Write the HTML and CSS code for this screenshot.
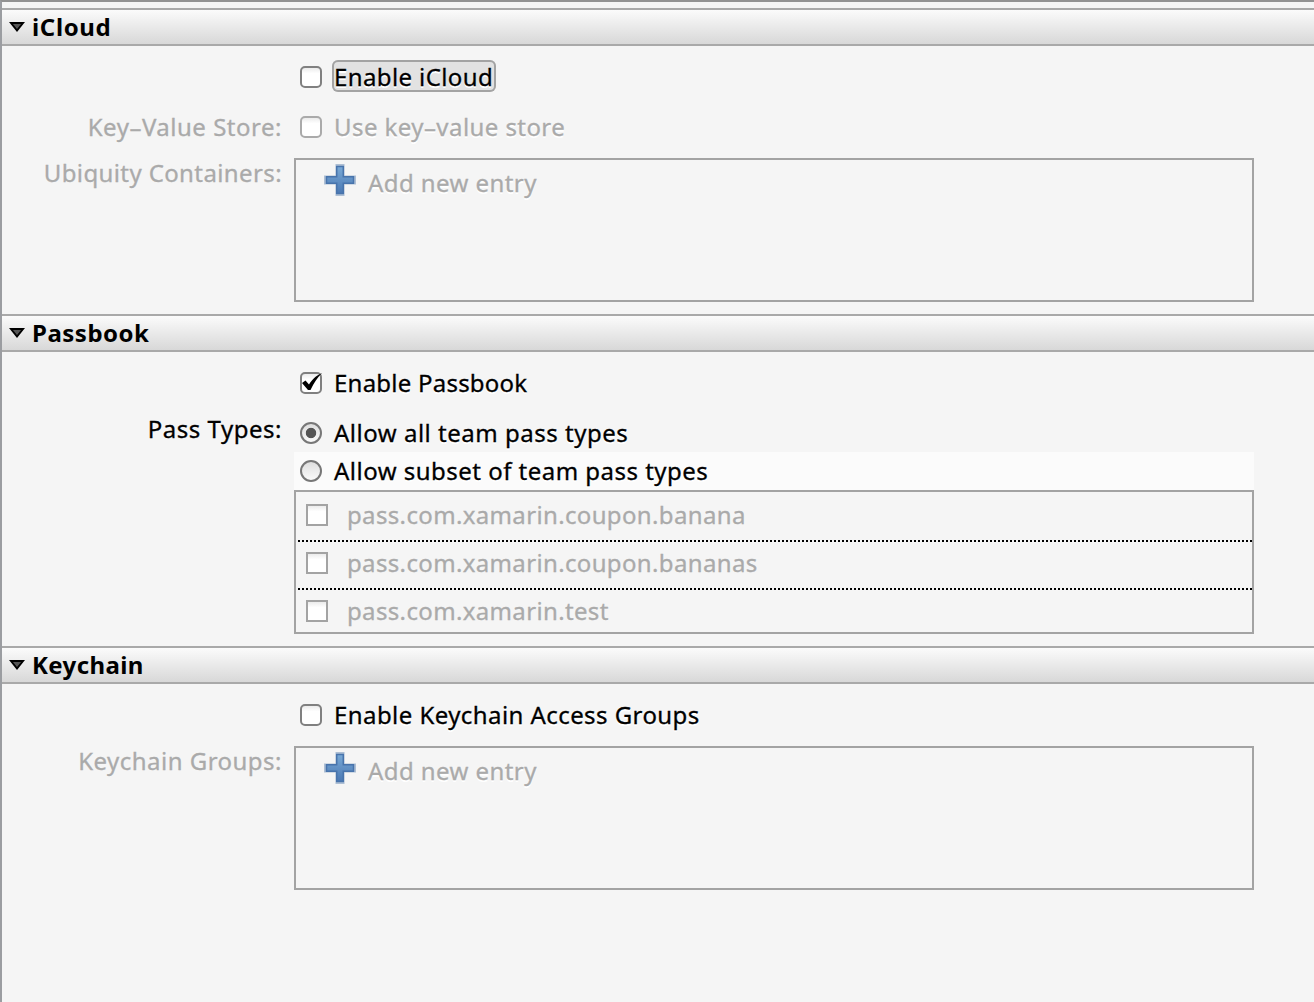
FILE: index.html
```html
<!DOCTYPE html>
<html lang="en">
<head>
<meta charset="utf-8">
<title>Entitlements</title>
<link rel="stylesheet" href="styles.css">
</head>
<body>
<main class="editor">
  <section class="panel">
    <h2 class="panel-title"><svg class="arrow" viewBox="0 0 16 12"><path d="M2 2H14L8 9.5Z"/></svg><span class="t-icloud">iCloud</span></h2>
    <div class="form">
      <label class="row option"><i class="check"></i><span class="focus"><span class="t-enable-icloud">Enable iCloud</span></span></label>
      <div class="label row muted"><span class="t-kv">Key–Value Store:</span></div>
      <label class="row option muted"><i class="check"></i><span class="t-usekv">Use key–value store</span></label>
      <div class="label muted spaced"><span class="t-ubiq">Ubiquity Containers:</span></div>
      <div class="box spaced"><div class="add muted"><svg class="plus" viewBox="0 0 32 32"><defs><linearGradient id="blue" x2="0" y2="1"><stop stop-color="#79a9d6"/><stop offset="1" stop-color="#4a78b3"/></linearGradient></defs><path class="plus-halo" d="M11.5 0H20.5V11.5H32V20.5H20.5V32H11.5V20.5H0V11.5H11.5Z"/><path class="plus-body" d="M12.7 2.5H19.3V12.7H29.5V19.3H19.3V29.5H12.7V19.3H2.5V12.7H12.7Z"/></svg><span class="t-add">Add new entry</span></div></div>
    </div>
  </section>
  <section class="panel">
    <h2 class="panel-title"><svg class="arrow" viewBox="0 0 16 12"><path d="M2 2H14L8 9.5Z"/></svg><span class="t-passbook">Passbook</span></h2>
    <div class="form">
      <label class="row option"><i class="check"><svg class="tick" viewBox="0 0 22 22"><path d="M2 11L5.5 8.5L9 12.5C12 8 15 4 22 1C17 6 14 11 10.5 18H8Z"/></svg></i><span class="t-enable-pass">Enable Passbook</span></label>
      <div class="label spaced"><span class="t-types">Pass Types:</span></div>
      <div class="spaced">
        <label class="option radio-row"><i class="radio on"></i><span class="t-all">Allow all team pass types</span></label>
        <label class="option radio-row tint"><i class="radio"></i><span class="t-subset">Allow subset of team pass types</span></label>
        <ul class="box list muted">
          <li><i class="square"></i><span class="t-pass">pass.com.xamarin.coupon.banana</span></li>
          <li><i class="square"></i><span class="t-pass">pass.com.xamarin.coupon.bananas</span></li>
          <li><i class="square"></i><span class="t-pass">pass.com.xamarin.test</span></li>
        </ul>
      </div>
    </div>
  </section>
  <section class="panel">
    <h2 class="panel-title"><svg class="arrow" viewBox="0 0 16 12"><path d="M2 2H14L8 9.5Z"/></svg><span class="t-keychain">Keychain</span></h2>
    <div class="form">
      <label class="row option"><i class="check"></i><span class="t-enable-key">Enable Keychain Access Groups</span></label>
      <div class="label muted spaced"><span class="t-groups">Keychain Groups:</span></div>
      <div class="box spaced"><div class="add muted"><svg class="plus" viewBox="0 0 32 32"><path class="plus-halo" d="M11.5 0H20.5V11.5H32V20.5H20.5V32H11.5V20.5H0V11.5H11.5Z"/><path class="plus-body" d="M12.7 2.5H19.3V12.7H29.5V19.3H19.3V29.5H12.7V19.3H2.5V12.7H12.7Z"/></svg><span class="t-add">Add new entry</span></div></div>
    </div>
  </section>
</main>
</body>
</html>
```
FILE: styles.css
```css
* { box-sizing: border-box; }
body { margin: 0; background: #f5f5f5; color: #000; font: 24px/30px "Noto Sans", "Open Sans", sans-serif; letter-spacing: .43px; }
.editor { min-height: 1002px; border-top: 2px solid #929292; border-left: 2px solid #9b9da1; padding-top: 6px; }
.panel-title { display: flex; align-items: center; height: 38px; margin: 0; padding-left: 7px; gap: 7px; border: solid #a9a9a9; border-width: 2px 0; background: linear-gradient(#fbfbfb, #d8d8d8); font-size: 24px; line-height: 30px; font-weight: 700; }
.arrow { width: 16px; height: 12px; fill: #555; stroke: #000; stroke-width: 2; }
.form { display: grid; grid-template-columns: 280px 960px; column-gap: 12px; padding: 6px 0 12px; -webkit-text-stroke: .3px; }
.row { height: 50px; }
.option { grid-column: 2; display: flex; align-items: center; padding-left: 6px; gap: 12px; white-space: nowrap; text-shadow: 0 2px 0 #fff; }
.label { grid-column: 1; text-align: right; white-space: nowrap; }
.label.row { line-height: 50px; }
.muted { color: #aaa; }
.spaced { margin-top: 6px; }
.check, .radio, .square { flex: none; width: 22px; height: 22px; border: 2px solid #808080; background: linear-gradient(#ececec, #fff 30%); }
.check { border-radius: 5px; }
.muted .check { border-color: #aaa; }
.tick { display: block; width: 22px; height: 22px; margin: -2px; overflow: visible; }
.radio { border-radius: 50%; border-color: #777; background: linear-gradient(#dedede, #fafafa); }
.radio.on { background: radial-gradient(circle, #555 4.8px, transparent 5.6px), linear-gradient(#dedede, #fafafa); }
.square { border-color: #a3a3a3; }
.focus { width: 164px; height: 32px; margin: -2px 0 0 -2px; padding: 2px 0 0 2px; border-radius: 6px; box-shadow: inset 0 0 0 2px #a3a3a3; background: #e2e2e2; }
.box { height: 144px; border: 2px solid #a3a3a3; }
.add { display: flex; gap: 12px; padding: 4px 0 0 28px; text-shadow: 0 2px 0 #fff; }
.add span { margin-top: 4px; }
.plus { width: 32px; height: 32px; }
.plus-halo { fill: #aebfd4; }
.plus-body { fill: url(#blue); stroke: #4874ac; stroke-width: 1.5; }
.radio-row { height: 38px; }
.tint { background: #fbfbfb; }
.list { margin: 0; padding: 0; list-style: none; }
.list li { display: flex; height: 48px; padding: 12px 0 0 10px; gap: 19px; background: no-repeat 0 0 / 100% 2px; }
.list li + li { background-image: repeating-linear-gradient(90deg, transparent 0 2px, #000 2px 4px); }
.list li:last-child { height: 44px; }
.list span { margin-top: -4px; }

/* per-string tracking */
.t-icloud { letter-spacing: .65px; }
.t-passbook, .t-kv, .t-types, .t-all { letter-spacing: .51px; }
.t-subset, .t-groups { letter-spacing: .48px; }
.t-pass { letter-spacing: .35px; }
.t-ubiq, .t-keychain, .t-enable-icloud { letter-spacing: .39px; }
.t-enable-pass { letter-spacing: .23px; }
```
